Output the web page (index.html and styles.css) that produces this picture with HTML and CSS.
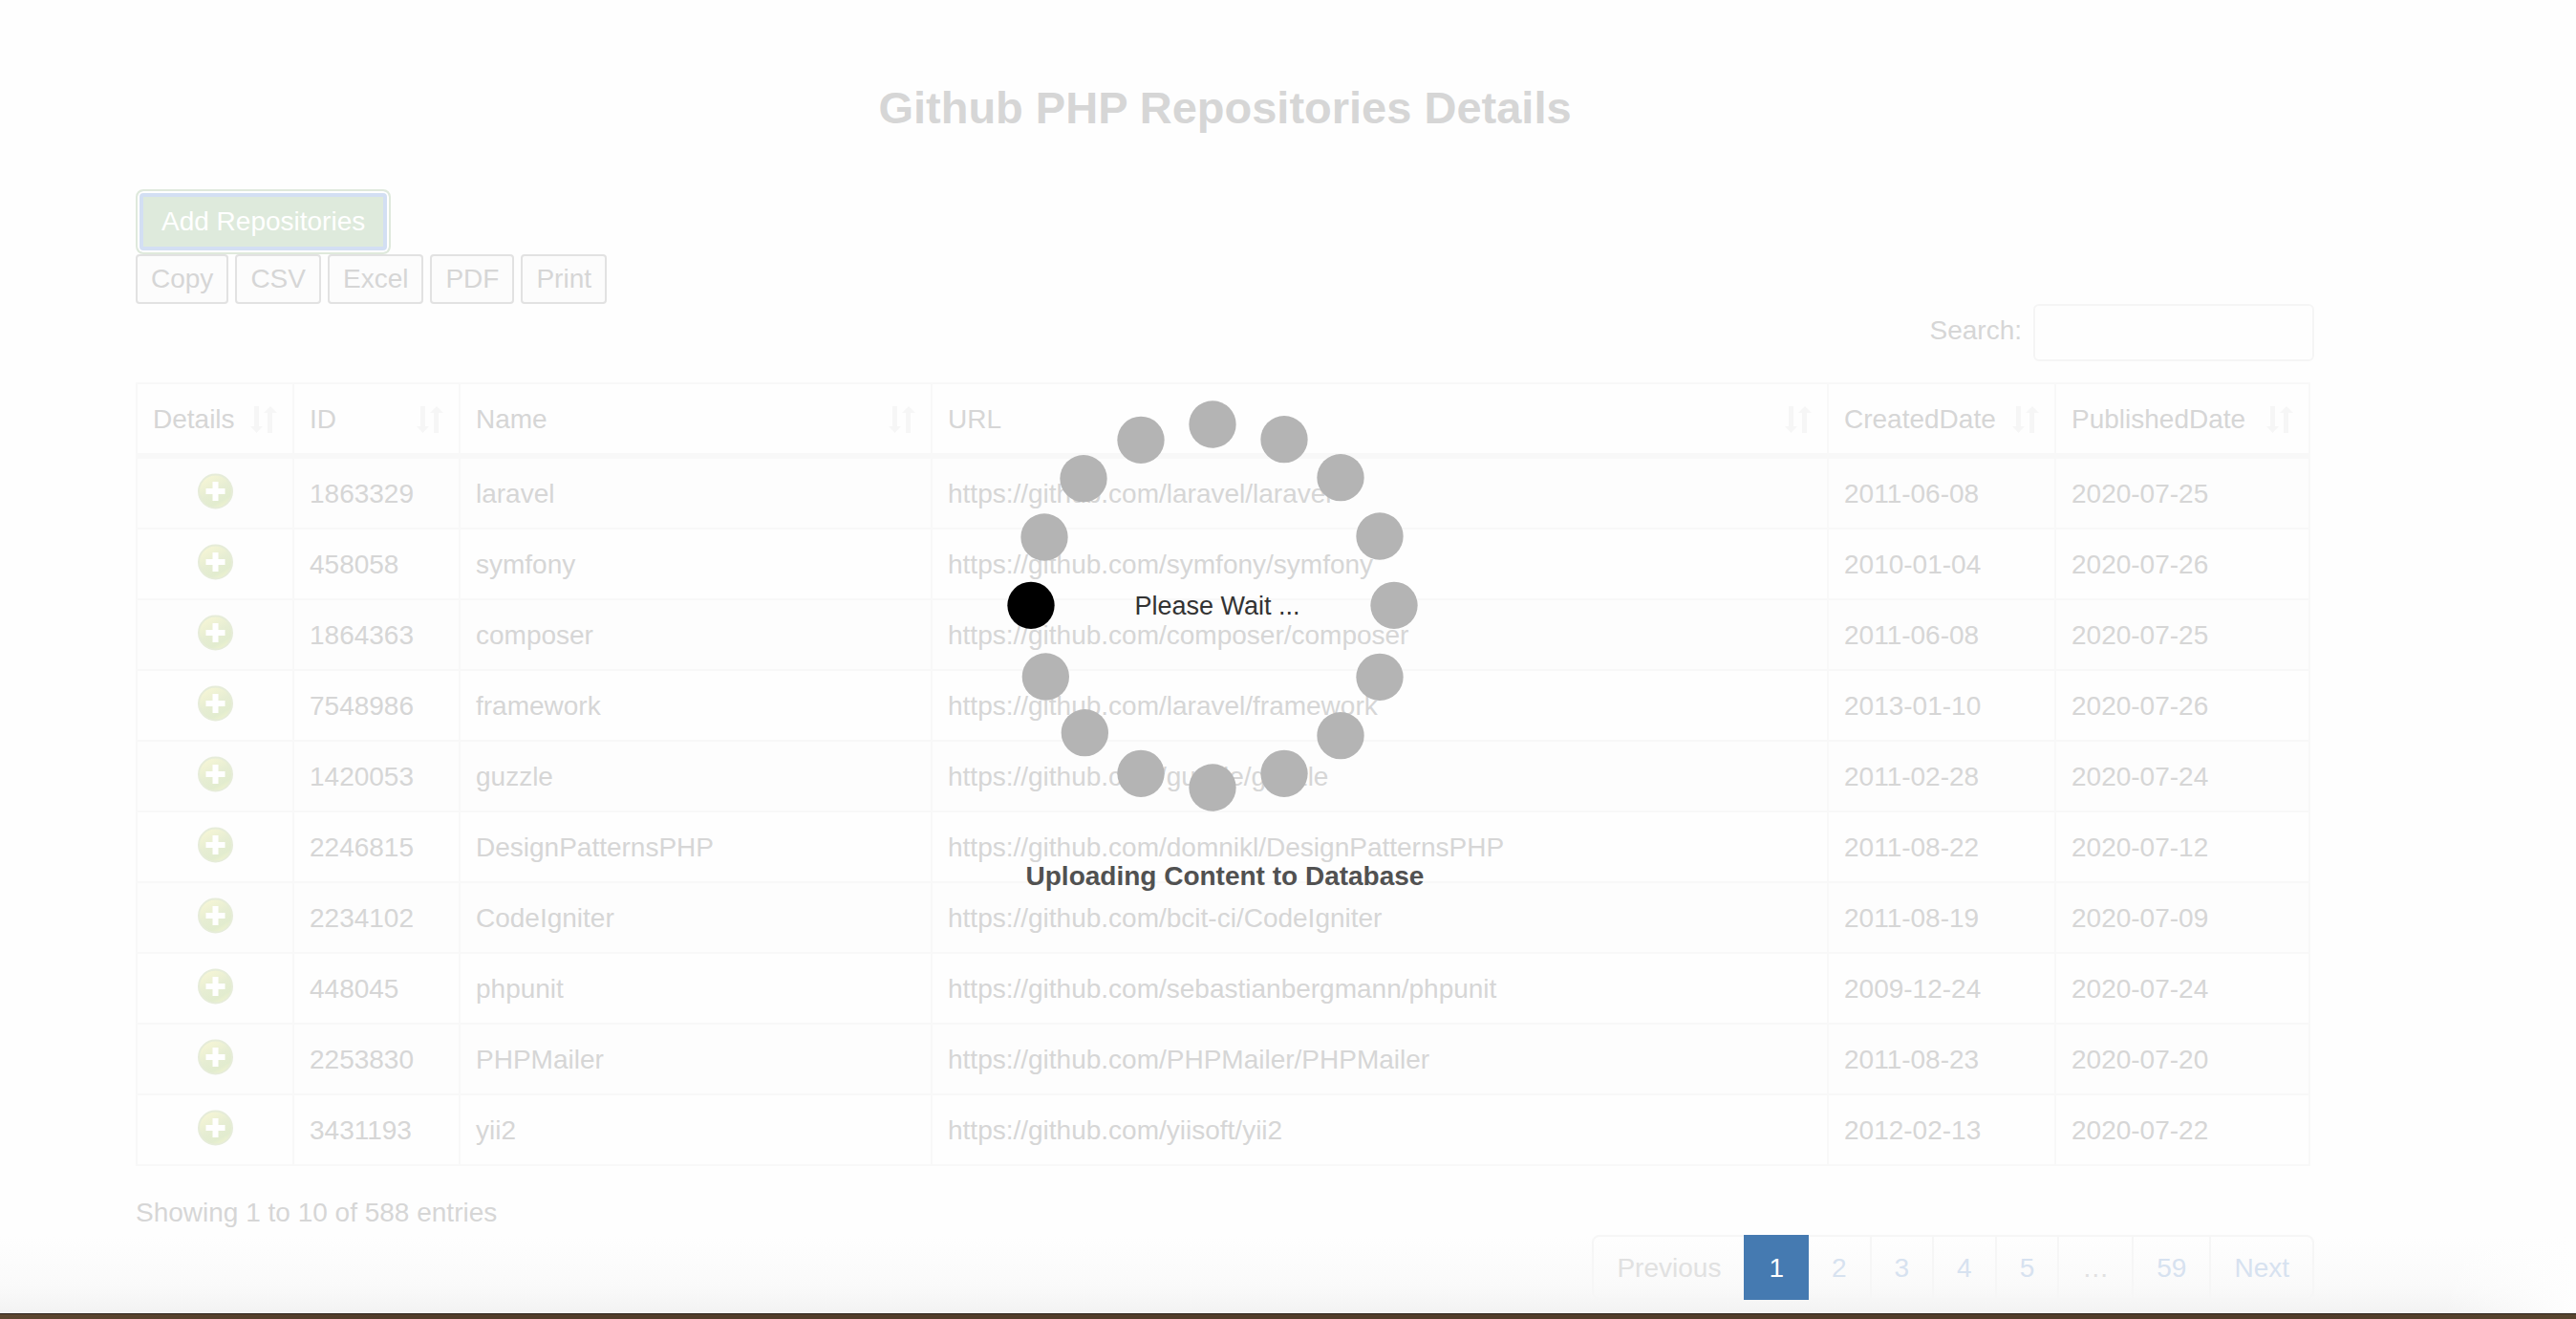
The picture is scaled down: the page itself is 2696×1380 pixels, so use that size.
FILE: index.html
```html
<!DOCTYPE html>
<html lang="en">
<head>
<meta charset="utf-8">
<title>Github PHP Repositories Details</title>
<link rel="stylesheet" href="styles.css">
</head>
<body>
<svg class="defs" aria-hidden="true">
  <defs>
    <linearGradient id="plus-fill" x1="0.2" y1="0" x2="0.75" y2="1">
      <stop offset="0" stop-color="#f8f7d6"/><stop offset="0.5" stop-color="#e6edd3"/><stop offset="0.8" stop-color="#e2eccf"/><stop offset="1" stop-color="#f1f4cf"/>
    </linearGradient>
    <symbol id="plus" viewBox="0 0 38 38">
      <circle cx="19.5" cy="19" r="17.5" fill="url(#plus-fill)" stroke="#e6ecd9" stroke-width="2"/>
      <path d="M19.5 9v20M9.5 19h20" stroke="#fff" stroke-width="6"/>
    </symbol>
    <symbol id="sort" viewBox="0 0 28 28">
      <path d="M4 0h5v21h4L6.500 28 0 21h4zM18 28h5V7h5L21 0l-7 7h4z" fill="#f6f6f6"/>
    </symbol>
  </defs>
</svg>
<main class="container">
  <h1 class="title">Github PHP Repositories Details</h1>
  <button class="btn-add" type="button">Add Repositories</button>
  <div class="exports">
    <button type="button">Copy</button>
    <button type="button">CSV</button>
    <button type="button">Excel</button>
    <button type="button">PDF</button>
    <button type="button">Print</button>
  </div>
  <div class="filter">
    <label for="search">Search:</label>
    <input id="search" type="search">
  </div>
  <table class="repos">
    <colgroup><col class="c-details"><col class="c-id"><col class="c-name"><col class="c-url"><col class="c-created"><col class="c-published"></colgroup>
    <thead>
      <tr>
        <th><span class="head">Details<svg class="sort"><use href="#sort"/></svg></span></th>
        <th><span class="head">ID<svg class="sort"><use href="#sort"/></svg></span></th>
        <th><span class="head">Name<svg class="sort"><use href="#sort"/></svg></span></th>
        <th><span class="head">URL<svg class="sort"><use href="#sort"/></svg></span></th>
        <th><span class="head">CreatedDate<svg class="sort"><use href="#sort"/></svg></span></th>
        <th><span class="head">PublishedDate<svg class="sort"><use href="#sort"/></svg></span></th>
      </tr>
    </thead>
    <tbody>
      <tr><td><svg class="plus"><use href="#plus"/></svg></td><td>1863329</td><td>laravel</td><td>https://github.com/laravel/laravel</td><td>2011-06-08</td><td>2020-07-25</td></tr>
      <tr><td><svg class="plus"><use href="#plus"/></svg></td><td>458058</td><td>symfony</td><td>https://github.com/symfony/symfony</td><td>2010-01-04</td><td>2020-07-26</td></tr>
      <tr><td><svg class="plus"><use href="#plus"/></svg></td><td>1864363</td><td>composer</td><td>https://github.com/composer/composer</td><td>2011-06-08</td><td>2020-07-25</td></tr>
      <tr><td><svg class="plus"><use href="#plus"/></svg></td><td>7548986</td><td>framework</td><td>https://github.com/laravel/framework</td><td>2013-01-10</td><td>2020-07-26</td></tr>
      <tr><td><svg class="plus"><use href="#plus"/></svg></td><td>1420053</td><td>guzzle</td><td>https://github.com/guzzle/guzzle</td><td>2011-02-28</td><td>2020-07-24</td></tr>
      <tr><td><svg class="plus"><use href="#plus"/></svg></td><td>2246815</td><td>DesignPatternsPHP</td><td>https://github.com/domnikl/DesignPatternsPHP</td><td>2011-08-22</td><td>2020-07-12</td></tr>
      <tr><td><svg class="plus"><use href="#plus"/></svg></td><td>2234102</td><td>CodeIgniter</td><td>https://github.com/bcit-ci/CodeIgniter</td><td>2011-08-19</td><td>2020-07-09</td></tr>
      <tr><td><svg class="plus"><use href="#plus"/></svg></td><td>448045</td><td>phpunit</td><td>https://github.com/sebastianbergmann/phpunit</td><td>2009-12-24</td><td>2020-07-24</td></tr>
      <tr><td><svg class="plus"><use href="#plus"/></svg></td><td>2253830</td><td>PHPMailer</td><td>https://github.com/PHPMailer/PHPMailer</td><td>2011-08-23</td><td>2020-07-20</td></tr>
      <tr><td><svg class="plus"><use href="#plus"/></svg></td><td>3431193</td><td>yii2</td><td>https://github.com/yiisoft/yii2</td><td>2012-02-13</td><td>2020-07-22</td></tr>
    </tbody>
  </table>
  <p class="info">Showing 1 to 10 of 588 entries</p>
  <nav class="pages" aria-label="Table pages">
    <a class="muted" href="#">Previous</a>
    <a class="active" href="#">1</a>
    <a href="#">2</a>
    <a href="#">3</a>
    <a href="#">4</a>
    <a href="#">5</a>
    <a class="muted" href="#">…</a>
    <a href="#">59</a>
    <a href="#">Next</a>
  </nav>
  <div class="loading" role="status">
    <svg class="spinner" viewBox="0 0 1290 1290">
      <g fill="#b4b4b4">
        <circle cx="645" cy="75" r="74"/>
        <circle cx="870" cy="122" r="74"/>
        <circle cx="1047" cy="242" r="74"/>
        <circle cx="1170" cy="426" r="74"/>
        <circle cx="1215" cy="643" r="74"/>
        <circle cx="1170" cy="868" r="74"/>
        <circle cx="1047" cy="1052" r="74"/>
        <circle cx="870" cy="1171" r="74"/>
        <circle cx="645" cy="1215" r="74"/>
        <circle cx="420" cy="1171" r="74"/>
        <circle cx="244" cy="1043" r="74"/>
        <circle cx="121" cy="867" r="74"/>
        <circle cx="117" cy="429" r="74"/>
        <circle cx="240" cy="245" r="74"/>
        <circle cx="420" cy="124" r="74"/>
      </g>
      <circle cx="75" cy="643" r="74" fill="#000"/>
    </svg>
    <span class="wait">Please Wait ...</span>
    <strong class="message">Uploading Content to Database</strong>
  </div>
</main>
<div class="window-edge"></div>
</body>
</html>
```
FILE: styles.css
```css
* { box-sizing: border-box; }

body {
  margin: 0;
  min-height: 100vh;
  display: flex;
  flex-direction: column;
  background:
    linear-gradient(to right, rgba(254, 254, 254, 0) calc(100% - 140px), #fefefe) bottom / 100% 86px no-repeat,
    linear-gradient(#fefefe, #fafafa 60%, #f1f1f1) bottom / 100% 86px no-repeat,
    #fefefe;
  font: 28px/40px "Liberation Sans", Arial, sans-serif;
  color: #d6d6d6;
}

button, input { font: inherit; color: inherit; }

.defs { position: absolute; width: 0; height: 0; }

.container {
  position: relative;
  flex: 1;
  display: flex;
  flex-direction: column;
  align-items: flex-start;
  padding: 86px 274px 14px 142px;
}

.title {
  align-self: center;
  margin: 0 0 58px;
  font-size: 47px;
  line-height: 54px;
  font-weight: 700;
}

.btn-add {
  height: 68px;
  padding: 0 25px;
  border: 2px solid #dfe9dc;
  border-radius: 8px;
  background: #deeadc;
  box-shadow: inset 0 0 0 2px #fff, inset 0 0 0 6px #d3dff3;
  color: #fff;
}

.exports { display: flex; gap: 7px; }

.exports button {
  height: 52px;
  padding: 0 14px;
  border: 2px solid #e2e2e2;
  border-radius: 4px;
  background: #fcfcfc;
}

.filter {
  align-self: flex-end;
  display: flex;
  gap: 12px;
  margin-bottom: 22px;
}

.filter label { padding-top: 8px; }

.filter input {
  width: 294px;
  height: 60px;
  padding: 0 20px;
  border: 2px solid #f5f5f5;
  border-radius: 6px;
  background: #fefefe;
  appearance: none;
}

.repos {
  width: calc(100% - 4px);
  table-layout: fixed;
  border-collapse: separate;
  border-spacing: 0;
  border: solid #f8f8f8;
  border-width: 2px 0 0 2px;
}

.c-details { width: 164px; }
.c-id { width: 174px; }
.c-name { width: 494px; }
.c-created { width: 238px; }
.c-published { width: 266px; }

.repos th, .repos td {
  padding: 17px 16px 15px;
  border: solid #f8f8f8;
  border-width: 0 2px 2px 0;
  font-weight: 400;
  text-align: left;
}

.repos th { border-bottom-width: 6px; }
.repos tbody tr:nth-child(odd) { background: #fdfdfd; }
.repos td:first-child { padding: 15px 16px 19px; line-height: 0; text-align: center; }

.head { display: flex; justify-content: space-between; align-items: center; }
.sort { width: 28px; height: 28px; }
.plus { width: 38px; height: 38px; }

.info { margin: 29px 0 3px; }

.pages { align-self: flex-end; display: flex; }

.pages a {
  height: 68px;
  padding: 13px 24px 11px;
  margin-left: -2px;
  border: 2px solid #f6f6f6;
  color: #d7e2f0;
  text-decoration: none;
}

.pages a:first-child { border-radius: 8px 0 0 8px; }
.pages a:last-child { border-radius: 0 8px 8px 0; }
.pages .muted { color: #e1e1e1; }
.pages .active { position: relative; background: #457ab1; border-color: #457ab1; color: #fff; }

.loading {
  position: absolute;
  top: 419px;
  left: 142px;
  right: 274px;
  display: grid;
  justify-items: center;
}

.spinner { grid-area: 1 / 1; width: 430px; height: 430px; margin-right: 26px; }
.wait { grid-area: 1 / 1; align-self: center; margin-right: 16px; font-size: 27px; color: #333; }
.message { grid-area: 2 / 1; margin-top: 48px; color: #515151; }

.window-edge {
  height: 6px;
  background: linear-gradient(to right, #5c4630, #513c2a 15%, #513c2a 90%, #58452f);
  border-top: 1px solid #2a2019;
}
```
